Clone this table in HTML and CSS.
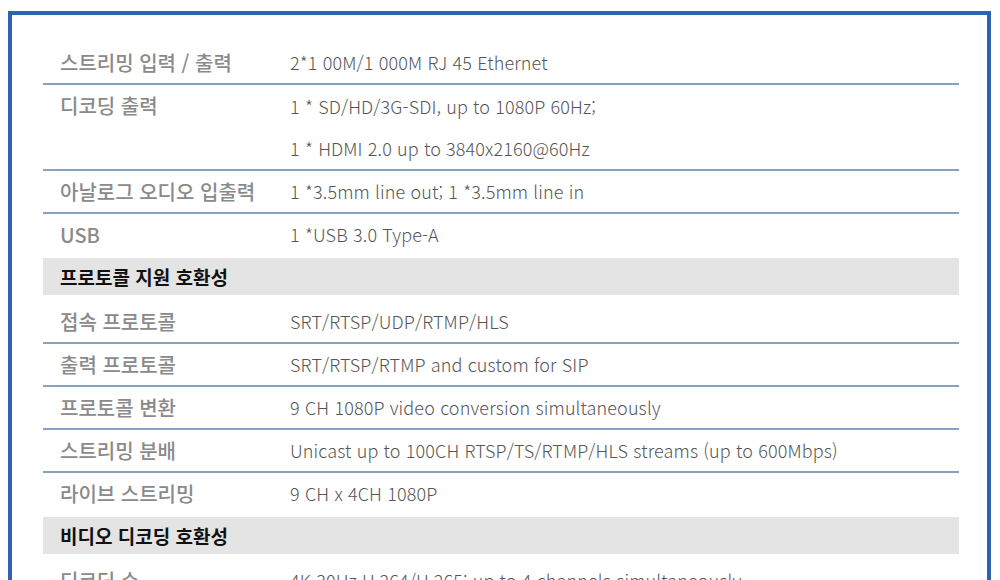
FILE: index.html
```html
<!DOCTYPE html>
<html lang="ko">
<head>
<meta charset="utf-8">
<title>Spec</title>
<link rel="stylesheet" href="styles.css">
</head>
<body>
<div class="frame">
  <div class="spec">
    <div class="row">
      <div class="label">스트리밍 입력 / 출력</div>
      <div class="value"><p>2*1 00M/1 000M RJ 45 Ethernet</p></div>
    </div>
    <div class="row">
      <div class="label">디코딩 출력</div>
      <div class="value multi"><p>1 * SD/HD/3G-SDI, up to 1080P 60Hz;</p><p>1 * HDMI 2.0 up to 3840x2160@60Hz</p></div>
    </div>
    <div class="row">
      <div class="label">아날로그 오디오 입출력</div>
      <div class="value"><p>1 *3.5mm line out; 1 *3.5mm line in</p></div>
    </div>
    <div class="row last">
      <div class="label">USB</div>
      <div class="value"><p>1 *USB 3.0 Type-A</p></div>
    </div>
    <div class="section">프로토콜 지원 호환성</div>
    <div class="row">
      <div class="label">접속 프로토콜</div>
      <div class="value"><p>SRT/RTSP/UDP/RTMP/HLS</p></div>
    </div>
    <div class="row">
      <div class="label">출력 프로토콜</div>
      <div class="value"><p>SRT/RTSP/RTMP and custom for SIP</p></div>
    </div>
    <div class="row">
      <div class="label">프로토콜 변환</div>
      <div class="value"><p>9 CH 1080P video conversion simultaneously</p></div>
    </div>
    <div class="row">
      <div class="label">스트리밍 분배</div>
      <div class="value"><p>Unicast up to 100CH RTSP/TS/RTMP/HLS streams (up to 600Mbps)</p></div>
    </div>
    <div class="row last">
      <div class="label">라이브 스트리밍</div>
      <div class="value"><p>9 CH x 4CH 1080P</p></div>
    </div>
    <div class="section">비디오 디코딩 호환성</div>
    <div class="row">
      <div class="label">디코딩 수</div>
      <div class="value"><p>4K 30Hz H.264/H.265; up to 4 channels simultaneously</p></div>
    </div>
  </div>
</div>
</body>
</html>
```
FILE: styles.css
```css
html, body {
  margin: 0;
  padding: 0;
  background: #fff;
  overflow: hidden;
}
body {
  font-family: "Noto Sans CJK KR", "Noto Sans", sans-serif;
}
.frame {
  margin: 11px 9px 0 8px;
  border: 4px solid #2f63ad;
  border-bottom: none;
  padding: 27px 28px 0 31px;
  height: 569px;
  box-sizing: border-box;
  overflow: hidden;
}
.spec {
  display: flex;
  flex-direction: column;
}
.row {
  display: flex;
  border-bottom: 2px solid #86a2c2;
}
.row.last {
  border-bottom: none;
  margin-bottom: 3px;
}
.label {
  width: 230px;
  padding-left: 17px;
  font-size: 20px;
  font-weight: 500;
  color: #8a8a8a;
  line-height: 41px;
  height: 41px;
  letter-spacing: 0;
}
.value {
  flex: 1;
}
.value p {
  margin: 0;
  font-size: 18px;
  color: #555;
  line-height: 41px;
  font-weight: 300;
  letter-spacing: 0.12px;
}
.value.multi p {
  line-height: 42px;
}
.section {
  background: #e4e4e4;
  height: 37px;
  line-height: 37px;
  padding-left: 17px;
  font-size: 19px;
  font-weight: 700;
  color: #111;
  margin-bottom: 6px;
}
```
